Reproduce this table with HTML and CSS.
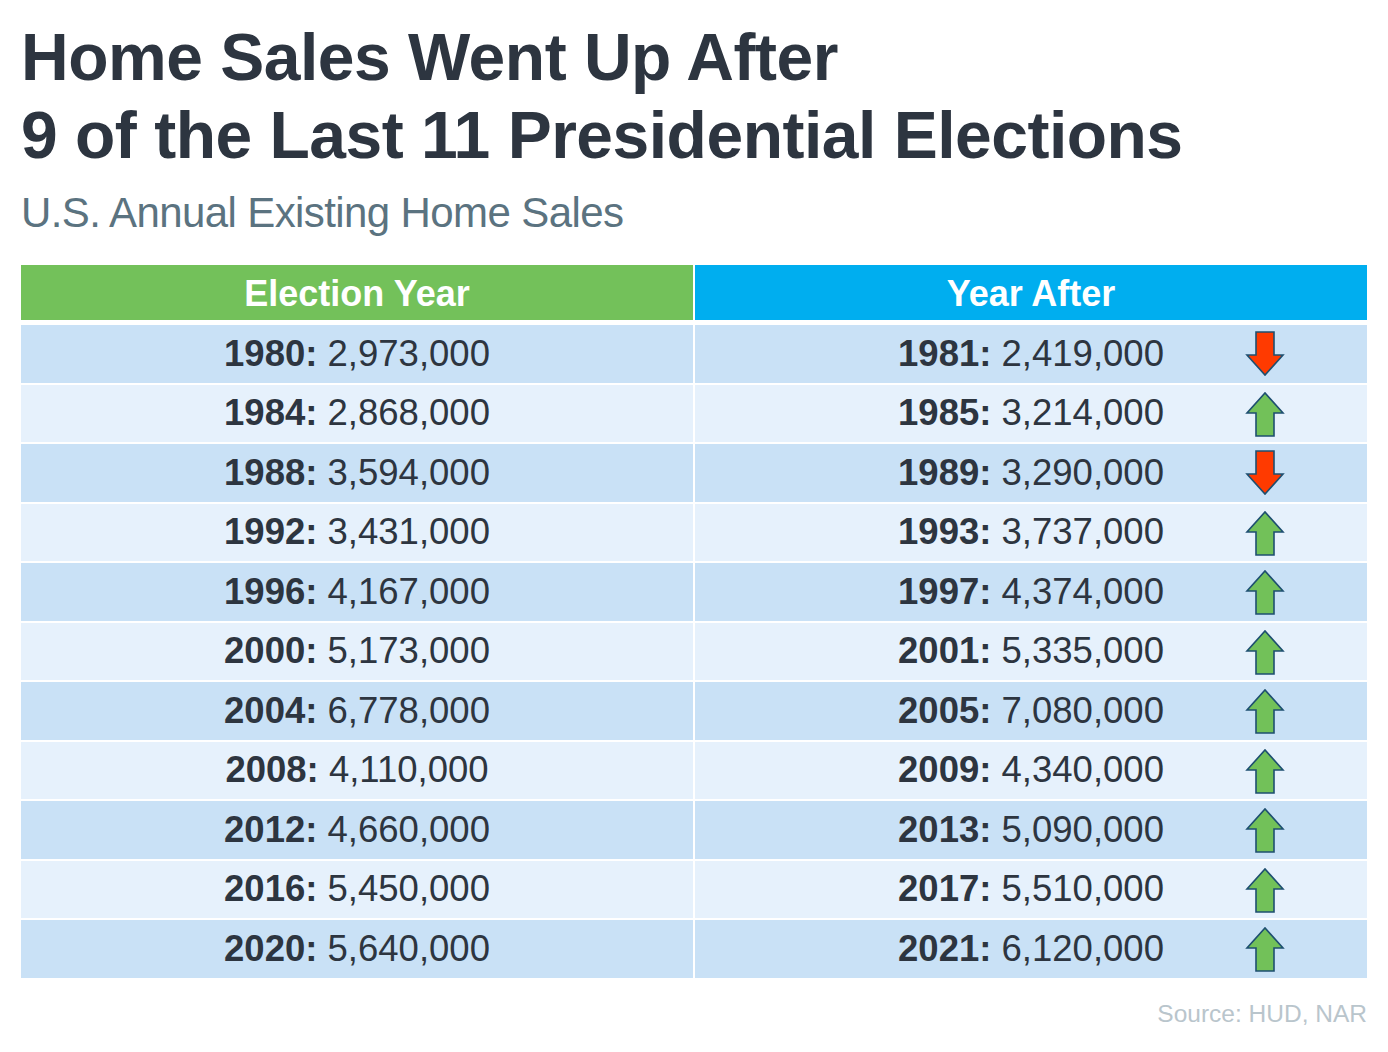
FILE: index.html
```html
<!DOCTYPE html>
<html>
<head>
<meta charset="utf-8">
<link rel="stylesheet" href="styles.css">
</head>
<body>
<div class="page">
  <h1 class="title">Home Sales Went Up After<br>9 of the Last 11 Presidential Elections</h1>
  <div class="subtitle">U.S. Annual Existing Home Sales</div>
  <div class="table">
    <div class="head green">Election Year</div>
    <div class="head blue">Year After</div>

    <div class="cell dark"><span><b>1980:</b> 2,973,000</span></div>
    <div class="cell dark right"><span><b>1981:</b> 2,419,000</span><svg class="arrow" viewBox="0 0 40 48"><path class="down" d="M11 2 H29 V25 H38 L20 45 L2 25 H11 Z"/></svg></div>

    <div class="cell light"><span><b>1984:</b> 2,868,000</span></div>
    <div class="cell light right"><span><b>1985:</b> 3,214,000</span><svg class="arrow" viewBox="0 0 40 48"><path class="up" d="M11 46 H29 V23 H38 L20 3 L2 23 H11 Z"/></svg></div>

    <div class="cell dark"><span><b>1988:</b> 3,594,000</span></div>
    <div class="cell dark right"><span><b>1989:</b> 3,290,000</span><svg class="arrow" viewBox="0 0 40 48"><path class="down" d="M11 2 H29 V25 H38 L20 45 L2 25 H11 Z"/></svg></div>

    <div class="cell light"><span><b>1992:</b> 3,431,000</span></div>
    <div class="cell light right"><span><b>1993:</b> 3,737,000</span><svg class="arrow" viewBox="0 0 40 48"><path class="up" d="M11 46 H29 V23 H38 L20 3 L2 23 H11 Z"/></svg></div>

    <div class="cell dark"><span><b>1996:</b> 4,167,000</span></div>
    <div class="cell dark right"><span><b>1997:</b> 4,374,000</span><svg class="arrow" viewBox="0 0 40 48"><path class="up" d="M11 46 H29 V23 H38 L20 3 L2 23 H11 Z"/></svg></div>

    <div class="cell light"><span><b>2000:</b> 5,173,000</span></div>
    <div class="cell light right"><span><b>2001:</b> 5,335,000</span><svg class="arrow" viewBox="0 0 40 48"><path class="up" d="M11 46 H29 V23 H38 L20 3 L2 23 H11 Z"/></svg></div>

    <div class="cell dark"><span><b>2004:</b> 6,778,000</span></div>
    <div class="cell dark right"><span><b>2005:</b> 7,080,000</span><svg class="arrow" viewBox="0 0 40 48"><path class="up" d="M11 46 H29 V23 H38 L20 3 L2 23 H11 Z"/></svg></div>

    <div class="cell light"><span><b>2008:</b> 4,110,000</span></div>
    <div class="cell light right"><span><b>2009:</b> 4,340,000</span><svg class="arrow" viewBox="0 0 40 48"><path class="up" d="M11 46 H29 V23 H38 L20 3 L2 23 H11 Z"/></svg></div>

    <div class="cell dark"><span><b>2012:</b> 4,660,000</span></div>
    <div class="cell dark right"><span><b>2013:</b> 5,090,000</span><svg class="arrow" viewBox="0 0 40 48"><path class="up" d="M11 46 H29 V23 H38 L20 3 L2 23 H11 Z"/></svg></div>

    <div class="cell light"><span><b>2016:</b> 5,450,000</span></div>
    <div class="cell light right"><span><b>2017:</b> 5,510,000</span><svg class="arrow" viewBox="0 0 40 48"><path class="up" d="M11 46 H29 V23 H38 L20 3 L2 23 H11 Z"/></svg></div>

    <div class="cell dark"><span><b>2020:</b> 5,640,000</span></div>
    <div class="cell dark right"><span><b>2021:</b> 6,120,000</span><svg class="arrow" viewBox="0 0 40 48"><path class="up" d="M11 46 H29 V23 H38 L20 3 L2 23 H11 Z"/></svg></div>
  </div>
  <div class="source">Source: HUD, NAR</div>
</div>
</body>
</html>
```
FILE: styles.css
```css
* { box-sizing: border-box; }
html, body { margin: 0; padding: 0; background: #ffffff; }
body { font-family: "Liberation Sans", Arial, sans-serif; }
.page { width: 1388px; height: 1052px; padding: 18px 21px 0 21px; }
.title {
  margin: 0;
  font-size: 66px;
  line-height: 78px;
  font-weight: bold;
  color: #2d3540;
  letter-spacing: -0.5px;
}
.subtitle {
  margin-top: 14px;
  font-size: 42px;
  line-height: 50px;
  color: #5b7380;
  letter-spacing: -0.6px;
}
.table {
  margin-top: 27px;
  display: grid;
  grid-template-columns: 672px 672px;
  column-gap: 2px;
  row-gap: 2px;
  grid-template-rows: 58px;
  grid-auto-rows: 57.5px;
}
.head {
  display: flex;
  align-items: center;
  justify-content: center;
  color: #ffffff;
  font-weight: bold;
  font-size: 36px;
  padding-top: 3px;
  margin-bottom: 3px;
}
.green { background: #73c15a; }
.blue { background: #00aeef; }
.cell {
  display: flex;
  align-items: center;
  justify-content: center;
  font-size: 36.5px;
  color: #2d3540;
  position: relative;
}
.cell b { font-weight: bold; }
.dark { background: #c9e1f6; }
.light { background: #e6f1fc; }
.right .arrow {
  position: absolute;
  left: 550px;
  top: 5px;
  width: 40px;
  height: 48px;
}
.arrow path { stroke: #1e4f70; stroke-width: 1.6; stroke-linejoin: miter; }
.arrow .up { fill: #72c159; }
.arrow .down { fill: #ff3a00; }
.source {
  margin-top: 22px;
  text-align: right;
  font-size: 24.5px;
  color: #b9c5cc;
}
```
